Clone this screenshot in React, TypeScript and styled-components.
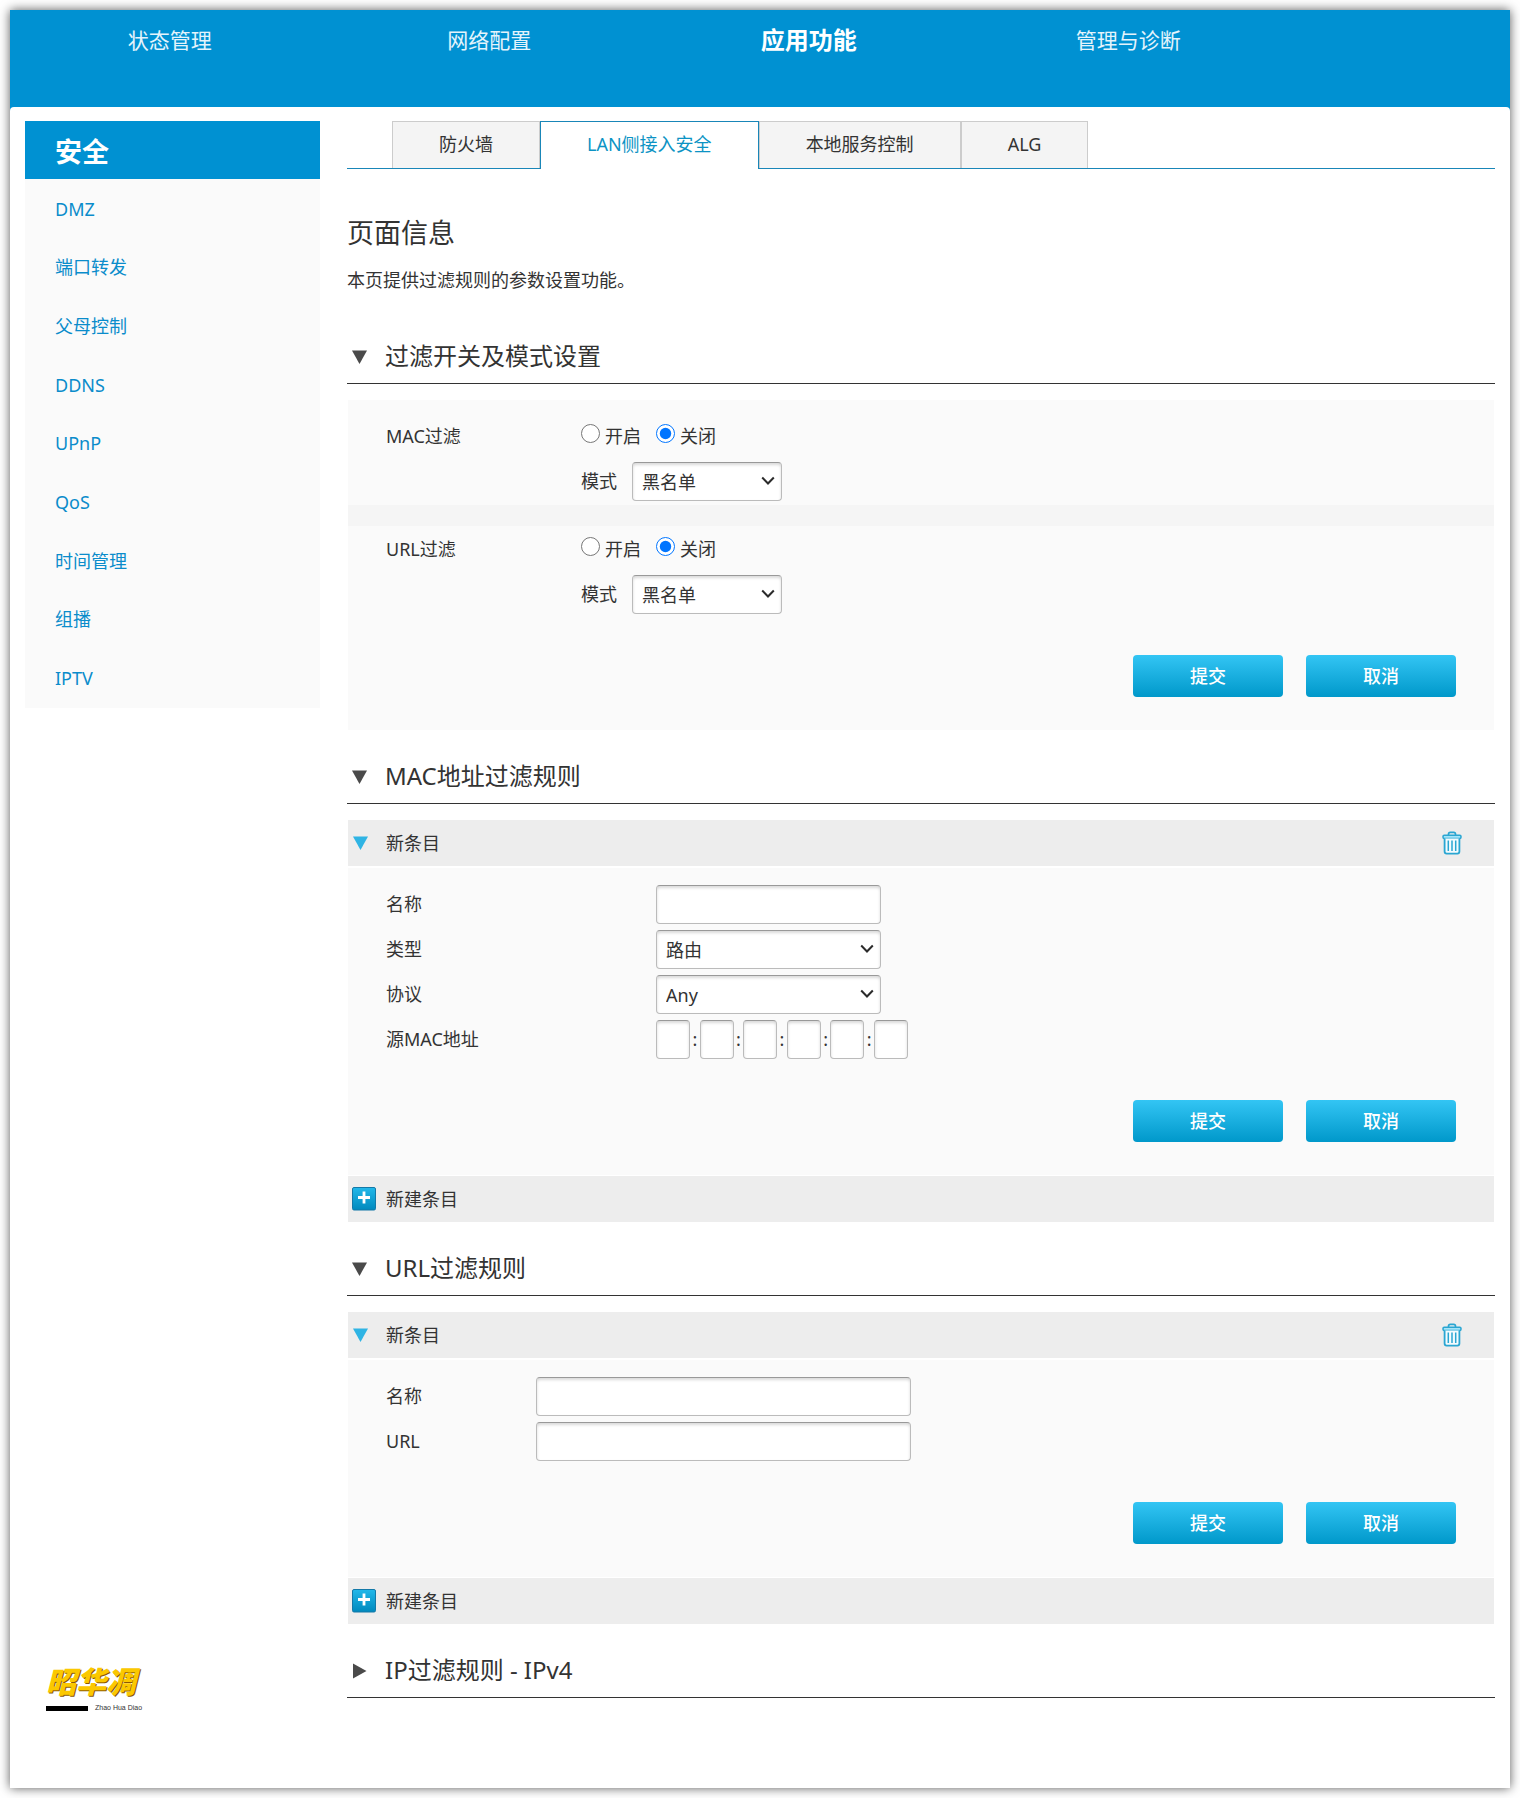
import React, { useId, useState } from "react";
import styled, { createGlobalStyle, css } from "styled-components";

const BLUE = "#0091d2";
const LINK = "#0a8ccb";
const TEXT = "#333";

const GlobalStyle = createGlobalStyle`
  *, *::before, *::after { box-sizing: border-box; }
  body {
    margin: 0;
    background: #fff;
    color: ${TEXT};
    font-family: "Noto Sans", "Noto Sans CJK SC", sans-serif;
    font-size: 18px;
    line-height: 27px;
  }
  button, input, select { font: inherit; color: inherit; margin: 0; }
  h1, h2, p, ul { margin: 0; padding: 0; }
  ul { list-style: none; }
  a { text-decoration: none; }
`;

const Frame = styled.div`
  margin: 10px;
  background: ${BLUE};
  box-shadow: 0 0 10px rgba(0, 0, 0, 0.65);
`;

const TopNav = styled.nav`
  display: grid;
  grid-template-columns: repeat(4, 21.3%);
  height: 97px;
  padding-top: 9px;
`;

const TopLink = styled.a<{ $active?: boolean }>`
  height: 42px;
  line-height: 42px;
  text-align: center;
  color: ${(p) => (p.$active ? "#fff" : "#e4f4fc")};
  font-size: ${(p) => (p.$active ? 24 : 21)}px;
  font-weight: ${(p) => (p.$active ? 700 : 400)};
`;

const Body = styled.div`
  display: flex;
  gap: 27px;
  padding: 14px 15px 74px;
  background: #fff;
  border-radius: 4px 4px 0 0;
`;

const Sidebar = styled.aside`
  display: flex;
  flex-direction: column;
  flex: 0 0 295px;
`;

const SideTitle = styled.h2`
  padding: 4px 30px 0;
  background: ${BLUE};
  color: #fff;
  font-size: 27px;
  font-weight: 700;
  line-height: 54px;
`;

const SideList = styled.ul`
  display: grid;
  grid-auto-rows: 1fr;
  align-items: center;
  min-height: 529px;
  padding-top: 1px;
  background: #fafafa;
`;

const SideLink = styled.a`
  display: block;
  padding: 0 30px;
  color: ${LINK};
`;

const Logo = styled.div`
  margin-top: auto;
  padding: 0 0 2px 21px;
`;

const LogoName = styled.div`
  margin-bottom: 5px;
  color: #fbc800;
  font-size: 30px;
  font-style: italic;
  font-weight: 900;
  line-height: 34px;
  text-shadow: 1px 1px 0 #8a5a00;
`;

const LogoCaption = styled.div`
  display: flex;
  align-items: center;
  gap: 7px;
  font-family: "Liberation Sans", Arial, sans-serif;
  font-size: 7px;
  line-height: 8px;

  &::before {
    content: "";
    width: 42px;
    height: 5px;
    background: #000;
  }
`;

const Main = styled.main`
  flex: 1;
  min-width: 0;
`;

const Tabs = styled.nav`
  display: flex;
  height: 48px;
  padding-left: 45px;
  border-bottom: 1px solid #1986b8;
`;

const Tab = styled.a<{ $active?: boolean }>`
  height: 47px;
  padding: 0 46px;
  border: 1px solid #ccc;
  border-bottom: 0;
  background: #f4f4f4;
  color: ${TEXT};
  line-height: 45px;
  white-space: nowrap;

  ${(p) =>
    p.$active &&
    css`
      height: 48px;
      border-color: #1986b8;
      background: #fff;
      color: #0c93c4;
    `}
`;

const PageTitle = styled.h1`
  margin-top: 44px;
  font-size: 27px;
  font-weight: 400;
  line-height: 40px;
`;

const PageText = styled.p`
  margin: 14px 0 16px;
`;

const SectionHeading = styled.h2`
  margin-bottom: 16px;
  padding: 20px 0 2px;
  border-bottom: 1px solid ${TEXT};
  font-size: 24px;
  font-weight: 400;
`;

const SectionToggle = styled.button`
  display: grid;
  grid-template-columns: 38px auto;
  align-items: center;
  width: 100%;
  height: 51px;
  padding: 0;
  border: 0;
  background: none;
  text-align: left;
  cursor: pointer;

  svg { margin: 2px 0 0 4px; }
`;

const Panel = styled.div`
  margin: 0 1px;
`;

const FormBody = styled.form<{ $divided?: boolean }>`
  display: flow-root;
  padding: 17px 38px 33px;
  background: #fafafa;
  ${(p) => p.$divided && "border-top: 2px solid #fff; border-bottom: 1px solid #fff;"}
`;

const FieldRows = styled.div<{ $label: number }>`
  display: grid;
  grid-template-columns: ${(p) => p.$label}px 1fr;
  grid-auto-rows: 39px;
  row-gap: 6px;
  align-items: center;
`;

const Separator = styled.div`
  height: 21px;
  margin: 4px -38px;
  background: #f5f5f5;
`;

const RadioGroup = styled.div`
  display: flex;
  gap: 15px;
`;

const RadioLabel = styled.label`
  display: flex;
  align-items: center;
  gap: 5px;
`;

const Radio = styled.input.attrs({ type: "radio" })`
  width: 19px;
  height: 19px;
  && { margin-bottom: 6px; }
`;

const ModeField = styled.div`
  display: flex;
  align-items: center;
  grid-column: 2;
  gap: 15px;
`;

const fieldBox = css<{ $width: number }>`
  width: ${(p) => p.$width}px;
  height: 39px;
  padding: 0 9px;
  border: 1px solid #bbb;
  border-top-color: #999;
  border-radius: 4px;
  background: #fff;
  box-shadow: inset 0 2px 3px rgba(0, 0, 0, 0.15);
`;

const TextInput = styled.input<{ $width: number }>`
  ${fieldBox}
`;

const SelectWrap = styled.span<{ $width: number }>`
  position: relative;
  display: block;
  width: ${(p) => p.$width}px;

  svg {
    position: absolute;
    top: 14px;
    right: 7px;
    pointer-events: none;
  }
`;

const NativeSelect = styled.select<{ $width: number }>`
  ${fieldBox}
  display: block;
  padding-top: 1px;
  appearance: none;
`;

const MacInputs = styled.div`
  display: grid;
  grid-template-columns: 34px repeat(5, 1fr 34px);
  align-items: center;
  width: 252px;
  text-align: center;
`;

const MacInput = styled.input<{ $width: number }>`
  ${fieldBox}
  padding: 0 2px;
`;

const Actions = styled.div`
  display: flex;
  justify-content: flex-end;
  gap: 23px;
  margin-top: 41px;
`;

const ActionButton = styled.button`
  width: 150px;
  height: 42px;
  padding: 0;
  border: 0;
  border-radius: 4px;
  background: linear-gradient(#33c5f4, #0098ca);
  && { color: #fff; }
  font-weight: 500;
  cursor: pointer;
`;

const Bar = styled.div`
  display: flex;
  align-items: center;
  justify-content: space-between;
  height: 46px;
  padding-right: 32px;
  background: #ededed;
`;

const BarButton = styled.button`
  display: grid;
  grid-template-columns: 34px auto;
  align-items: center;
  padding: 0 0 0 4px;
  border: 0;
  background: none;
  text-align: left;
  cursor: pointer;
`;

const IconButton = styled.button`
  display: flex;
  padding: 0;
  border: 0;
  background: none;
  cursor: pointer;
`;

function Arrow({ open, color = "#4a4a4a" }: { open: boolean; color?: string }) {
  return (
    <svg width="17" height="16" viewBox="0 0 17 16" aria-hidden="true">
      <path d={open ? "M1 1.5h15L8.500 15z" : "M2 0.500v15L15.500 8z"} fill={color} />
    </svg>
  );
}

function Chevron() {
  return (
    <svg width="14" height="10" viewBox="0 0 14 10" aria-hidden="true">
      <path d="M1.200 1.500 7 7.500l5.800-6" fill="none" stroke="#2b2b2b" strokeWidth="2" />
    </svg>
  );
}

function TrashIcon() {
  return (
    <svg width="20" height="24" viewBox="0 0 20 24" fill="none" stroke="#2aa6d2" aria-hidden="true">
      <path d="M6.500 4V3.200a1.800 1.800 0 0 1 1.800-1.800h3.400a1.800 1.800 0 0 1 1.800 1.800V4" strokeWidth="1.700" />
      <rect x="1" y="4.200" width="18" height="3.200" rx="1.200" fill="#a5e4f8" strokeWidth="1.500" />
      <path d="M2.600 7.600v13a2 2 0 0 0 2 2h10.800a2 2 0 0 0 2-2v-13" fill="#f3fbfe" strokeWidth="1.800" />
      <path d="M6.300 9.500v10.500M10 9.500v10.500M13.700 9.500v10.500" strokeWidth="1.500" />
    </svg>
  );
}

function PlusIcon() {
  return (
    <svg width="24" height="24" viewBox="0 0 24 24" aria-hidden="true">
      <defs>
        <linearGradient id="plus-fill" x1="0" y1="0" x2="0" y2="1">
          <stop offset="0" stopColor="#22b8ea" />
          <stop offset="1" stopColor="#0089bd" />
        </linearGradient>
      </defs>
      <rect x="0.500" y="0.500" width="23" height="22.500" rx="1.500" fill="url(#plus-fill)" stroke="#1479a8" />
      <path d="M12 4.500v12M6 10.500h12" stroke="#fff" strokeWidth="2.800" />
    </svg>
  );
}

function Select({ id, width, options }: { id: string; width: number; options: string[] }) {
  return (
    <SelectWrap $width={width}>
      <NativeSelect id={id} $width={width}>
        {options.map((o) => (
          <option key={o}>{o}</option>
        ))}
      </NativeSelect>
      <Chevron />
    </SelectWrap>
  );
}

function FormActions() {
  return (
    <Actions>
      <ActionButton type="button">提交</ActionButton>
      <ActionButton type="reset">取消</ActionButton>
    </Actions>
  );
}

function Section({
  title,
  defaultOpen = true,
  children,
}: {
  title: string;
  defaultOpen?: boolean;
  children?: React.ReactNode;
}) {
  const [open, setOpen] = useState(defaultOpen);
  return (
    <section>
      <SectionHeading>
        <SectionToggle type="button" aria-expanded={open} onClick={() => setOpen(!open)}>
          <Arrow open={open} />
          {title}
        </SectionToggle>
      </SectionHeading>
      {open && <Panel>{children}</Panel>}
    </section>
  );
}

function FilterSwitch({ label }: { label: string }) {
  const id = useId();
  return (
    <FieldRows $label={195}>
      <span id={id + "label"}>{label}</span>
      <RadioGroup role="radiogroup" aria-labelledby={id + "label"}>
        <RadioLabel>
          <Radio name={id} />
          开启
        </RadioLabel>
        <RadioLabel>
          <Radio name={id} defaultChecked />
          关闭
        </RadioLabel>
      </RadioGroup>
      <ModeField>
        <label htmlFor={id + "mode"}>模式</label>
        <Select id={id + "mode"} width={150} options={["黑名单", "白名单"]} />
      </ModeField>
    </FieldRows>
  );
}

function RuleEditor({ children }: { children: React.ReactNode }) {
  const [open, setOpen] = useState(true);
  return (
    <>
      <Bar>
        <BarButton type="button" aria-expanded={open} onClick={() => setOpen(!open)}>
          <Arrow open={open} color="#2fb4e4" />
          新条目
        </BarButton>
        <IconButton type="button" aria-label="删除">
          <TrashIcon />
        </IconButton>
      </Bar>
      {open && (
        <FormBody $divided>
          {children}
          <FormActions />
        </FormBody>
      )}
      <Bar>
        <BarButton type="button">
          <PlusIcon />
          新建条目
        </BarButton>
      </Bar>
    </>
  );
}

const topItems = ["状态管理", "网络配置", "应用功能", "管理与诊断"];
const sideItems = ["DMZ", "端口转发", "父母控制", "DDNS", "UPnP", "QoS", "时间管理", "组播", "IPTV"];
const tabItems = ["防火墙", "LAN侧接入安全", "本地服务控制", "ALG"];

export default function App() {
  return (
    <>
      <GlobalStyle />
      <Frame>
        <TopNav>
          {topItems.map((t) => (
            <TopLink key={t} href="#" $active={t === "应用功能"}>
              {t}
            </TopLink>
          ))}
        </TopNav>
        <Body>
          <Sidebar>
            <SideTitle>安全</SideTitle>
            <SideList>
              {sideItems.map((t) => (
                <li key={t}>
                  <SideLink href="#">{t}</SideLink>
                </li>
              ))}
            </SideList>
            <Logo>
              <LogoName>昭华凋</LogoName>
              <LogoCaption>Zhao Hua Diao</LogoCaption>
            </Logo>
          </Sidebar>
          <Main>
            <Tabs>
              {tabItems.map((t) => (
                <Tab key={t} href="#" $active={t === "LAN侧接入安全"}>
                  {t}
                </Tab>
              ))}
            </Tabs>
            <PageTitle>页面信息</PageTitle>
            <PageText>本页提供过滤规则的参数设置功能。</PageText>

            <Section title="过滤开关及模式设置">
              <FormBody>
                <FilterSwitch label="MAC过滤" />
                <Separator />
                <FilterSwitch label="URL过滤" />
                <FormActions />
              </FormBody>
            </Section>

            <Section title="MAC地址过滤规则">
              <RuleEditor>
                <FieldRows $label={270}>
                  <label htmlFor="mac-name">名称</label>
                  <TextInput id="mac-name" $width={225} />
                  <label htmlFor="mac-type">类型</label>
                  <Select id="mac-type" width={225} options={["路由", "桥接"]} />
                  <label htmlFor="mac-protocol">协议</label>
                  <Select id="mac-protocol" width={225} options={["Any", "IP", "ARP"]} />
                  <label htmlFor="mac-0">源MAC地址</label>
                  <MacInputs>
                    {[0, 1, 2, 3, 4, 5].map((i) => (
                      <React.Fragment key={i}>
                        {i > 0 && <span>:</span>}
                        <MacInput
                          id={"mac-" + i}
                          aria-label={"源MAC地址 " + (i + 1)}
                          maxLength={2}
                          $width={34}
                        />
                      </React.Fragment>
                    ))}
                  </MacInputs>
                </FieldRows>
              </RuleEditor>
            </Section>

            <Section title="URL过滤规则">
              <RuleEditor>
                <FieldRows $label={150}>
                  <label htmlFor="url-name">名称</label>
                  <TextInput id="url-name" $width={375} />
                  <label htmlFor="url-address">URL</label>
                  <TextInput id="url-address" $width={375} />
                </FieldRows>
              </RuleEditor>
            </Section>

            <Section title="IP过滤规则 - IPv4" defaultOpen={false} />
          </Main>
        </Body>
      </Frame>
    </>
  );
}
